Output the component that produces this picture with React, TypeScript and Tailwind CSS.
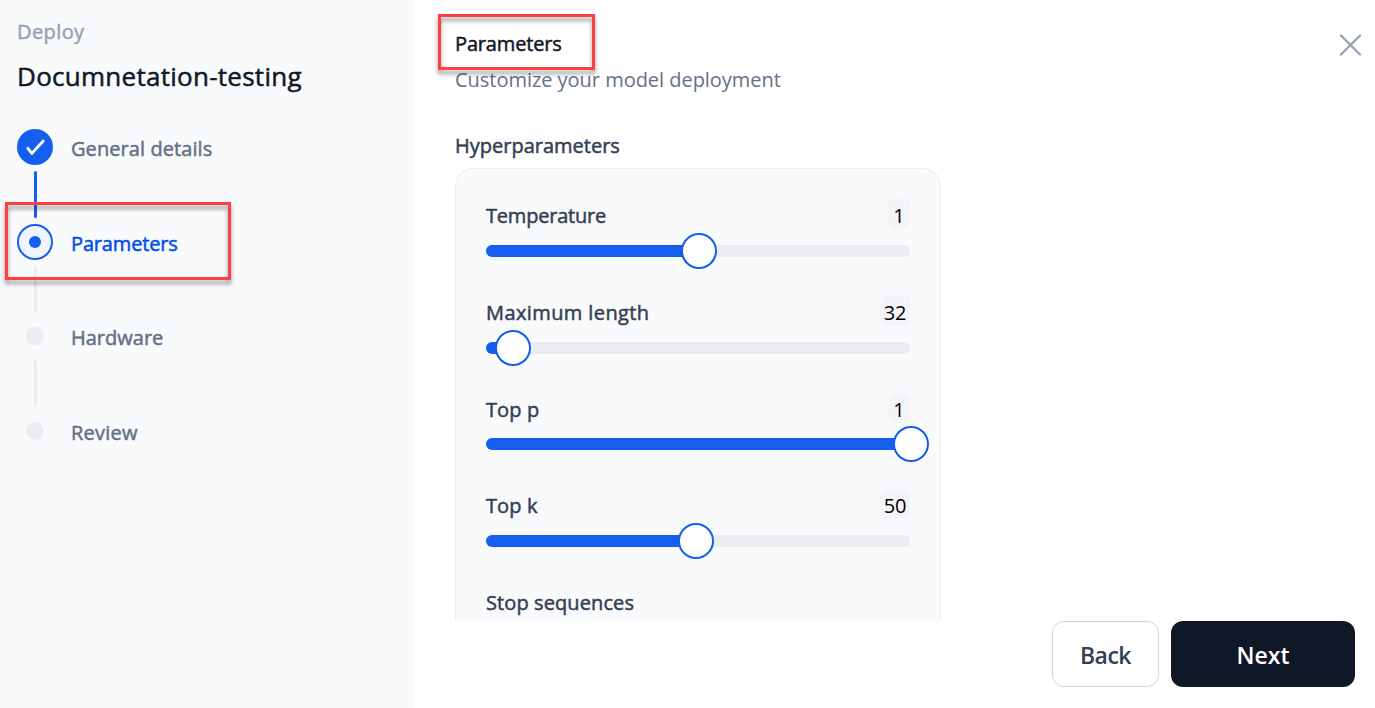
type Step = {
  label: string;
  state: "done" | "current" | "upcoming";
  tracking: string;
  line?: string;
};

const steps: Step[] = [
  { label: "General details", state: "done", tracking: "tracking-[0.08px]", line: "h-[47px] bg-[#155eef]" },
  { label: "Parameters", state: "current", tracking: "tracking-[-0.15px]", line: "h-[46px] bg-[#eaecf0]" },
  { label: "Hardware", state: "upcoming", tracking: "tracking-normal", line: "h-[47px] bg-[#eaecf0]" },
  { label: "Review", state: "upcoming", tracking: "tracking-[0.25px]" },
];

const sliders = [
  { label: "Temperature", value: "1", at: 50, tracking: "tracking-[-0.2px]", gap: "mt-1" },
  { label: "Maximum length", value: "32", at: 6.2, tracking: "tracking-[0.4px]", gap: "mt-1" },
  { label: "Top p", value: "1", at: 100, tracking: "tracking-[0.1px]", gap: "mt-[3px]" },
  { label: "Top k", value: "50", at: 49.5, tracking: "tracking-[0.1px]", gap: "mt-1" },
];

const medium = "[-webkit-text-stroke:0.5px_currentColor]";

function StepIcon({ state }: { state: Step["state"] }) {
  if (state === "done") {
    return (
      <span className="flex size-9 items-center justify-center rounded-full bg-[#155eef]">
        <svg width="36" height="36" viewBox="0 0 36 36" fill="none">
          <path d="M10.9 19.3 14.9 24.4 26.2 12" stroke="white" strokeWidth="2.8" strokeLinecap="round" strokeLinejoin="round" />
        </svg>
      </span>
    );
  }
  if (state === "current") {
    return (
      <span className="flex size-9 items-center justify-center rounded-full border-2 border-[#155eef] bg-[#eff4ff]">
        <span className="size-3 rounded-full bg-[#155eef]" />
      </span>
    );
  }
  return (
    <span className="flex size-9 items-center justify-center">
      <span className="size-[18px] rounded-full bg-[#eaecf0]" />
    </span>
  );
}

function Highlight({ className }: { className: string }) {
  return (
    <span
      className={`pointer-events-none absolute border-3 border-[#ff4040] [filter:drop-shadow(0_4px_2px_rgba(0,0,0,0.4))] ${className}`}
    />
  );
}

function Slider({ at }: { at: number }) {
  return (
    <div className="relative flex h-9 items-center">
      <div className="h-3 w-full overflow-hidden rounded-full bg-[#eaecf0]">
        <div className="h-full bg-[#155eef]" style={{ width: `${at}%` }} />
      </div>
      <span
        className="absolute top-0 ml-[0.5px] size-9 -translate-x-1/2 rounded-full border-2 border-[#155eef] bg-white"
        style={{ left: `${at}%` }}
      />
    </div>
  );
}

export default function App() {
  return (
    <div className="flex h-[708px] w-[1375px] overflow-hidden bg-white font-['Open_Sans','Noto_Sans',sans-serif] text-[20px] leading-7">
      <aside className="w-[413px] shrink-0 bg-[#f8fafc] pt-[18px] pl-[17px]">
        <p className={`tracking-[0.4px] text-[#98a2b3] ${medium}`}>Deploy</p>
        <h1 className={`mt-[13px] text-[26px] leading-[34px] tracking-[0.27px] text-[#101828] ${medium}`}>
          Documnetation-testing
        </h1>
        <ol className="mt-9">
          {steps.map((s) => (
            <li key={s.label} className="relative flex gap-[18px]">
              <div className="flex w-9 shrink-0 flex-col items-center">
                <StepIcon state={s.state} />
                {s.line && <span className={`my-1.5 ml-px w-[3px] rounded-full ${s.line}`} />}
              </div>
              <span
                className={`pt-0.5 leading-9 ${medium} ${s.tracking} ${s.state === "current" ? "text-[#004eeb]" : "text-[#667085]"}`}
              >
                {s.label}
              </span>
              {s.state === "current" && <Highlight className="-top-[22px] -left-3 h-[78px] w-[226px]" />}
            </li>
          ))}
        </ol>
      </aside>

      <main className="flex min-w-0 flex-1 flex-col pr-5 pl-[42px]">
        <header className="flex justify-between pt-[30px]">
          <div>
            <div className="relative">
              <h2 className={`tracking-[-0.15px] text-[#101828] ${medium}`}>Parameters</h2>
              <Highlight className="-top-4 -left-[17px] h-14 w-[157px]" />
            </div>
            <p className="mt-2 tracking-[-0.03px] text-[#667085]">Customize your model deployment</p>
          </div>
          <svg className="mt-[3px] -mr-[11px]" width="32" height="24" viewBox="0 0 32 24" fill="none" aria-label="Close">
            <path d="M7 2.5 26 21.5M26 2.5 7 21.5" stroke="#98a2b3" strokeWidth="2.4" strokeLinecap="round" />
          </svg>
        </header>

        <section className="mt-[37px] h-[490px] w-[486px] overflow-hidden pt-px">
          <h3 className={`text-[#344054] ${medium}`}>Hyperparameters</h3>
          <div className="mt-2 flex h-[560px] flex-col gap-[27px] rounded-[18px] border border-[#eaecf0] bg-[#f9fafc] px-[30px] pt-[30px]">
            {sliders.map((s) => (
              <div key={s.label}>
                <div className="flex h-[30px] items-center justify-between">
                  <span className={`pt-[3px] text-[#344054] ${medium} ${s.tracking}`}>{s.label}</span>
                  <span className="flex h-[30px] min-w-[22px] items-center justify-center rounded-md bg-[#f2f4f7] px-[3.5px] pt-1 text-black">
                    {s.value}
                  </span>
                </div>
                <div className={s.gap}>
                  <Slider at={s.at} />
                </div>
              </div>
            ))}
            <p className={`mt-[3px] tracking-[0.1px] text-[#344054] ${medium}`}>Stop sequences</p>
          </div>
        </section>

        <footer className="flex justify-end gap-3 text-[23px] font-semibold">
          <button className="flex h-[66px] w-[107px] items-center justify-center rounded-xl border border-[#d0d5dd] bg-white pt-0.5 tracking-[-0.5px] text-[#344054]">
            Back
          </button>
          <button className="flex h-[66px] w-[184px] items-center justify-center rounded-xl bg-[#101828] pt-0.5 text-white">
            Next
          </button>
        </footer>
      </main>
    </div>
  );
}
